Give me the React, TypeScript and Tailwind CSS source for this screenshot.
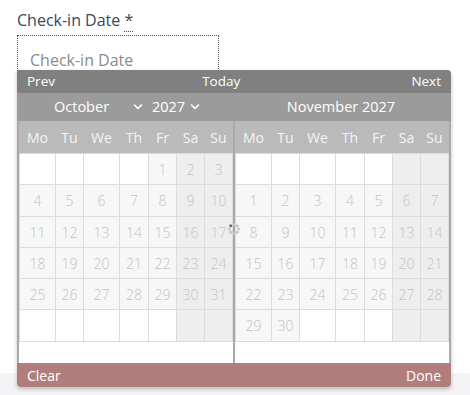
const WEEKDAYS = ['Mo', 'Tu', 'We', 'Th', 'Fr', 'Sa', 'Su'];

function buildMonth(offset: number, days: number): (number | null)[] {
  const cells: (number | null)[] = [];
  for (let i = 0; i < 42; i++) {
    const d = i - offset + 1;
    cells.push(d >= 1 && d <= days ? d : null);
  }
  return cells;
}

function Chevron({ className }: { className?: string }) {
  return (
    <svg viewBox="0 0 10 6" className={className} fill="none" stroke="currentColor" strokeWidth="1.6" strokeLinecap="round" strokeLinejoin="round">
      <polyline points="1.5,1 5,4.5 8.5,1" />
    </svg>
  );
}

function Spinner() {
  const dots = Array.from({ length: 8 }, (_, i) => {
    const a = (i / 8) * Math.PI * 2 - (3 * Math.PI) / 4;
    return { x: 7 + Math.cos(a) * 4.6, y: 7 + Math.sin(a) * 4.6, dark: i === 0 };
  });
  return (
    <svg viewBox="0 0 14 14" className="w-[14px] h-[14px]">
      {dots.map((d, i) => (
        <circle key={i} cx={d.x} cy={d.y} r="1.5" fill={d.dark ? '#6b6b6b' : '#c4c4c4'} />
      ))}
    </svg>
  );
}

function MonthGrid({ cells }: { cells: (number | null)[] }) {
  return (
    <div className="w-[214px]">
      <div className="grid grid-cols-[35px_27px_35px_28px_27px_27px_27px] gap-px px-px h-[32px] bg-[#bababa] text-[14px] text-[#f4f4f4]">
        {WEEKDAYS.map((w) => (
          <div key={w} className="flex items-center justify-center">{w}</div>
        ))}
      </div>
      <div className="grid grid-cols-[35px_27px_35px_28px_27px_27px_27px] grid-rows-[30px_31px_30px_30px_30px_31px] gap-px p-px bg-[#dcdcdc]">
        {cells.map((d, i) => {
          const weekend = i % 7 >= 5;
          const bg = weekend ? 'bg-[#eeeeee]' : d ? 'bg-[#f7f7f7]' : 'bg-white';
          return (
            <div key={i} className={`${bg} flex items-center justify-center text-[14px] font-light text-[#c4c4c4]`}>
              {d ?? ''}
            </div>
          );
        })}
      </div>
      <div className="h-[21px] bg-white" />
    </div>
  );
}

export default function App() {
  const october = buildMonth(4, 31);
  const november = buildMonth(7, 30);

  return (
    <div className="relative flex flex-col h-[395px] w-[470px] bg-white font-['Open_Sans',sans-serif] overflow-hidden">
      <div className="px-[17px] pt-[8px]">
        <label className="block text-[16px] leading-[24px] text-[#34495e]">
          Check-in Date <abbr className="no-underline border-b border-dotted border-[#34495e]" title="required">*</abbr>
        </label>
        <div className="mt-[3px] w-[202px] h-[40px] border border-dotted border-[#555] pl-[12px] pt-[12px] text-[16px] leading-[24px] text-[#8a8a8a]">
          Check-in Date
        </div>
      </div>

      <div className="flex-1" />
      <div className="h-[22px] bg-[#f4f4f6]" />

      {/* Datepicker popup */}
      <div className="absolute left-[17px] top-[70px] w-[434px] rounded-tr-[4px] rounded-b-[4px] shadow-[0_2px_4px_rgba(0,0,0,0.25)] bg-white">
        <div className="flex items-center justify-between h-[23px] px-[10px] bg-[#808080] text-white text-[13.5px] font-medium rounded-tr-[4px]">
          <span>Prev</span>
          <span className="mr-[24px]">Today</span>
          <span>Next</span>
        </div>

        <div className="flex h-[28px] bg-[#9b9b9b] text-white text-[14.5px]">
          <div className="w-[216px] flex items-center pl-[37px]">
            <span className="w-[79px]">October</span>
            <Chevron className="w-[10px] h-[6px]" />
            <span className="ml-[9px]">2027</span>
            <Chevron className="ml-[5px] w-[10px] h-[6px]" />
          </div>
          <div className="flex-1 flex items-center justify-center pr-[2px]">November 2027</div>
        </div>

        <div className="flex border-x-2 border-[#a9a9a9]">
          <MonthGrid cells={october} />
          <div className="w-[2px] bg-[#a9a9a9]" />
          <MonthGrid cells={november} />
        </div>

        <div className="flex items-center justify-between h-[24px] px-[10px] bg-[#b07f7d] text-white text-[14px] rounded-b-[4px]">
          <span>Clear</span>
          <span>Done</span>
        </div>
      </div>

      <div className="absolute left-[227px] top-[222px]">
        <Spinner />
      </div>
    </div>
  );
}
